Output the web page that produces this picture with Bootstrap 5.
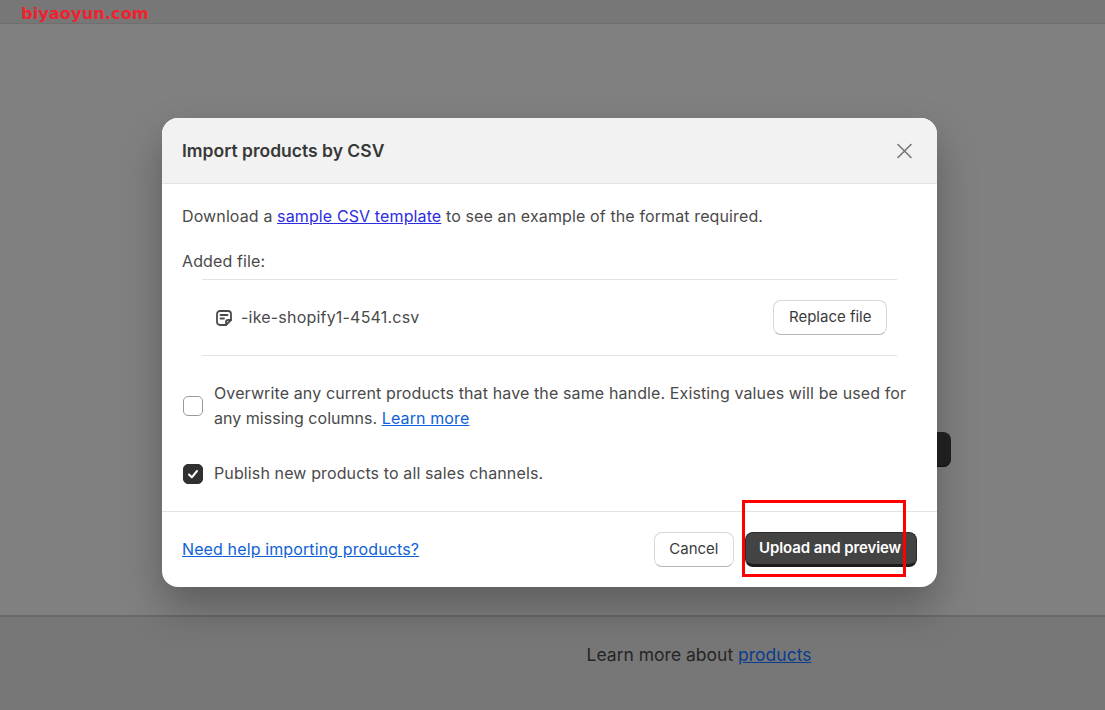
<!doctype html>
<html lang="en">
<head>
<meta charset="utf-8">
<title>Import products by CSV</title>
<link href="https://cdn.jsdelivr.net/npm/bootstrap@5.3.0/dist/css/bootstrap.min.css" rel="stylesheet">
<style>
html,body{height:100%}
body{background:#808080;font-family:Inter,"Liberation Sans",sans-serif;font-size:16px;color:#303030;overflow:hidden;letter-spacing:.12px}
.page-shell{height:710px;position:relative;display:flex;flex-direction:column}
.top-strip{height:24px;background:#777;border-bottom:1px solid #6f6f6f;padding-left:21px;flex:none}
.wm{font-family:"DejaVu Sans",sans-serif;font-weight:700;font-size:16.3px;line-height:28px;color:#f0222f;letter-spacing:0;display:block}
.page-main{flex:1 1 auto;background:#808080}
.page-foot{height:95px;flex:none;background:#777;border-top:2px solid #696969;text-align:center;padding-top:25px;font-size:17.5px;color:#252525;letter-spacing:0;padding-left:293px}
.page-foot a{color:#0b3d8c}
.behind-btn{position:absolute;left:900px;top:432px;width:51px;height:35px;background:#222;border-radius:8px;box-shadow:inset 0 -1px 0 #111}
.dialog-box{position:absolute;left:162px;top:118px;width:775px;height:469px;border:0;border-radius:16px;overflow:hidden;background:#fff;box-shadow:0 20px 40px rgba(0,0,0,.28)}
.dialog-box .modal-header{height:66px;background:#f2f2f2;border-bottom:1px solid #e3e3e3;padding:0 24px 0 20px;border-radius:0}
.dialog-title{font-size:17.5px;font-weight:600;letter-spacing:0;color:#383838;margin:0}
.close-x{width:18px;height:18px;padding:0;border:0;background:none;color:#777;display:flex}
.dialog-body{padding:0 20px;height:327px}
.intro-line{margin:0;padding-top:22px;line-height:20px;color:#4a4a4a}
.intro-line a{color:#2c2ce0}
.added-label{margin:0;padding-top:25px;line-height:20px;color:#4a4a4a}
.file-row{margin:8px 20px 0;height:77px;border-top:1px solid #e3e3e3;border-bottom:1px solid #e3e3e3;padding:0 10px 0 13px;color:#4a4a4a}
.file-name{letter-spacing:.2px;margin-top:-1px}
.soft-btn{background:#fff;border:1px solid #d8d8d8;border-bottom-color:#b5b5b5;border-radius:8px;color:#3b3b3b;font-size:15px;line-height:20px;padding:5px 14.5px 7px;height:35px;letter-spacing:0}
.check-line{display:flex;align-items:center;gap:11px;color:#4a4a4a;line-height:25px}
.check-line.first{margin-top:25px}
.check-line.second{margin-top:30px}
.check-line a{color:#0f62d6}
.tight-run{letter-spacing:.02px}
.box-mark{width:20px;height:20px;border-radius:5px;border:1px solid #999;background:#fff;flex:none;margin-left:1px}
.box-mark.on{background:#303030;border-color:#303030;display:flex;align-items:center;justify-content:center}
.check-text{flex:1}
.dialog-foot{height:76px;border-top:1px solid #e3e3e3;padding:0 20px}
.dialog-foot>a{color:#0f62d6;margin-top:-2px}
.btn-pair{gap:11px}
.primary-dark{background:#434343;color:#fff;border:1px solid #2b2b2b;border-bottom:3px solid #1c1c1c;border-radius:8px;font-weight:600;font-size:15px;height:35px;padding:0 15px 0 13px;letter-spacing:-.1px}
.red-frame{position:absolute;left:742px;top:500px;width:164px;height:77px;border:3px solid #f00;pointer-events:none}
</style>
</head>
<body>
<div class="page-shell">
  <div class="top-strip"><span class="wm">biyaoyun.com</span></div>
  <div class="page-main"></div>
  <div class="page-foot">Learn more about <a href="#">products</a></div>
  <div class="behind-btn"></div>

  <div class="modal-content dialog-box">
    <div class="modal-header d-flex align-items-center justify-content-between">
      <h2 class="dialog-title">Import products by CSV</h2>
      <button class="close-x" aria-label="Close"><svg width="18" height="18" viewBox="0 0 18 18" fill="none" stroke="currentColor" stroke-width="1.6" stroke-linecap="round"><path d="M3 2.500l13 13M16 2.500l-13 13"/></svg></button>
    </div>
    <div class="dialog-body">
      <p class="intro-line">Download a <a href="#">sample CSV template</a> to see an example of the format required.</p>
      <p class="added-label">Added file:</p>
      <div class="file-row d-flex align-items-center">
        <svg class="me-2" width="18" height="18" viewBox="0 0 18 18" fill="none" stroke="#4a4a4a" stroke-width="1.800" stroke-linejoin="round" stroke-linecap="round"><path d="M5 2h8a3 3 0 0 1 3 3v6l-5 5H5a3 3 0 0 1-3-3V5a3 3 0 0 1 3-3z"/><path d="M5.500 6h7M5.500 9.500h3.500"/><path d="M11 16v-3a2 2 0 0 1 2-2h3" /></svg>
        <span class="file-name">-ike-shopify1-4541.csv</span>
        <button class="soft-btn ms-auto">Replace file</button>
      </div>
      <div class="check-line first">
        <span class="box-mark"></span>
        <span class="check-text">Overwrite any current products that have the same handle. Existing values will be used for <span class="tight-run">any missing columns.</span> <a href="#">Learn more</a></span>
      </div>
      <div class="check-line second">
        <span class="box-mark on"><svg width="12" height="12" viewBox="0 0 12 12" fill="none" stroke="#fff" stroke-width="2" stroke-linecap="round" stroke-linejoin="round"><path d="M2 6.500l2.800 2.800L10 3"/></svg></span>
        <span class="check-text">Publish new products to all sales channels.</span>
      </div>
    </div>
    <div class="dialog-foot d-flex align-items-center">
      <a href="#">Need help importing products?</a>
      <div class="ms-auto d-flex btn-pair">
        <button class="soft-btn">Cancel</button>
        <button class="primary-dark">Upload and preview</button>
      </div>
    </div>
  </div>
  <div class="red-frame"></div>
</div>
<script src="https://cdn.jsdelivr.net/npm/bootstrap@5.3.0/dist/js/bootstrap.bundle.min.js"></script>
</body>
</html>
